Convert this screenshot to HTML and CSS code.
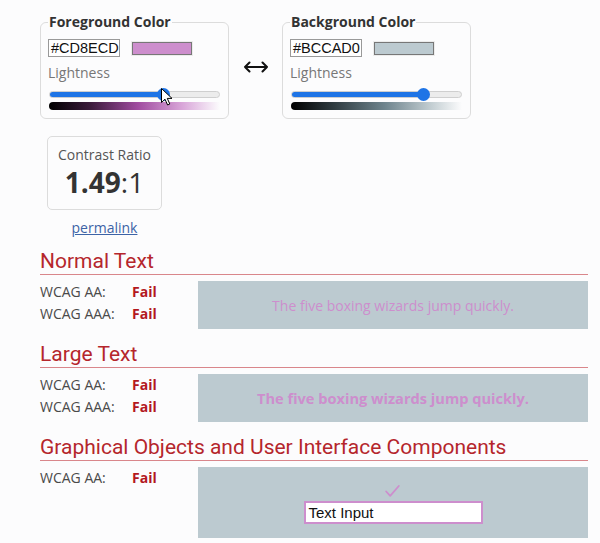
FILE: index.html
```html
<!DOCTYPE html>
<html>
<head>
<meta charset="utf-8">
<link rel="stylesheet" href="styles.css">
</head>
<body>
<div class="page">
  <div class="pickers">
    <fieldset class="picker">
      <legend>Foreground Color</legend>
      <div class="hexrow">
        <div class="hex">#CD8ECD</div>
        <div class="swatch"><span class="swatch-fill fg"></span></div>
      </div>
      <div class="label">Lightness</div>
      <div class="slider">
        <div class="track"><div class="fill" style="width:66.5%"></div></div>
        <div class="thumb" style="left:66.5%"></div>
        <svg class="cursor" width="12" height="18" viewBox="0 0 12 18"><path d="M0.5 0.5 L0.5 14.5 L4 11.2 L6.6 17 L8.8 16 L6.3 10.4 L11 10.4 Z" fill="#fff" stroke="#000" stroke-width="1" stroke-linejoin="round"/></svg>
      </div>
      <div class="grad fg-grad"></div>
    </fieldset>
    <div class="swap">
      <svg width="26" height="12" viewBox="0 0 26 12"><path d="M2 6 H24 M6.5 1.5 L2 6 L6.5 10.5 M19.5 1.5 L24 6 L19.5 10.5" fill="none" stroke="#111" stroke-width="2" stroke-linecap="round" stroke-linejoin="round"/></svg>
    </div>
    <fieldset class="picker">
      <legend>Background Color</legend>
      <div class="hexrow">
        <div class="hex">#BCCAD0</div>
        <div class="swatch"><span class="swatch-fill bg"></span></div>
      </div>
      <div class="label">Lightness</div>
      <div class="slider">
        <div class="track"><div class="fill" style="width:77%"></div></div>
        <div class="thumb" style="left:77%"></div>
      </div>
      <div class="grad bg-grad"></div>
    </fieldset>
  </div>

  <div class="ratio-col">
    <div class="ratio-box">
      <div class="ratio-title">Contrast Ratio</div>
      <div class="ratio-value"><b>1.49</b>:1</div>
    </div>
    <a class="permalink" href="#">permalink</a>
  </div>

  <section class="result">
    <h2>Normal Text</h2>
    <div class="result-body">
      <div class="checks">
        <div class="row"><span class="lvl">WCAG AA:</span><span class="fail">Fail</span></div>
        <div class="row"><span class="lvl">WCAG AAA:</span><span class="fail">Fail</span></div>
      </div>
      <div class="sample sample-normal">The five boxing wizards jump quickly.</div>
    </div>
  </section>

  <section class="result">
    <h2>Large Text</h2>
    <div class="result-body">
      <div class="checks">
        <div class="row"><span class="lvl">WCAG AA:</span><span class="fail">Fail</span></div>
        <div class="row"><span class="lvl">WCAG AAA:</span><span class="fail">Fail</span></div>
      </div>
      <div class="sample sample-large">The five boxing wizards jump quickly.</div>
    </div>
  </section>

  <section class="result">
    <h2>Graphical Objects and User Interface Components</h2>
    <div class="result-body">
      <div class="checks">
        <div class="row"><span class="lvl">WCAG AA:</span><span class="fail">Fail</span></div>
      </div>
      <div class="sample sample-ui">
        <svg class="check" width="15" height="12" viewBox="0 0 15 12"><path d="M1.2 6.5 L5.2 10.8 L13.8 1" fill="none" stroke="#cd8ecd" stroke-width="1.8" stroke-linecap="round" stroke-linejoin="round"/></svg>
        <div class="text-input">Text Input</div>
      </div>
    </div>
  </section>
</div>
</body>
</html>
```

FILE: styles.css
```css
* { box-sizing: border-box; }
html, body { margin: 0; padding: 0; }
body {
  background: #fcfcfd;
  font-family: "Open Sans", "Liberation Sans", sans-serif;
  color: #444;
  width: 600px;
  height: 543px;
  overflow: hidden;
}
.page { padding: 12px 12px 0 40px; }

.pickers { display: flex; align-items: flex-start; }
.picker {
  margin: 0;
  width: 189px;
  border: 1px solid #dcdcdc;
  border-radius: 6px;
  padding: 7px 8px 8px 7px;
  min-width: 0;
}
.picker legend {
  padding: 0 1px;
  font-weight: 700;
  font-size: 14px;
  line-height: 20px;
  color: #333;
}
.hexrow { display: flex; align-items: center; gap: 11px; }
.hex {
  width: 72px;
  height: 18px;
  border: 1px solid #999;
  background: #fff;
  font-family: "Liberation Sans", Arial, sans-serif;
  font-size: 14.5px;
  line-height: 16px;
  color: #111;
  padding-left: 2px;
  white-space: nowrap;
  overflow: hidden;
}
.swatch {
  width: 62px;
  height: 15px;
  padding: 1px;
  background: #ececec;
  display: flex;
}
.swatch-fill { flex: 1; border: 1px solid #777; }
.swatch-fill.fg { background: #cd8ecd; }
.swatch-fill.bg { background: #bccad0; }
.label {
  margin-top: 6px;
  font-size: 14px;
  line-height: 20px;
  color: #777;
}
.slider {
  position: relative;
  height: 14px;
  margin-top: 4px;
  margin-left: 1px;
}
.track {
  position: absolute;
  left: 0; right: 0; top: 4px;
  height: 7px;
  border-radius: 4px;
  background: #ececec;
  border: 1px solid #cfcfcf;
  overflow: hidden;
}
.fill { height: 100%; background: #1e74e6; }
.thumb {
  position: absolute;
  top: 1px;
  width: 13px; height: 13px;
  margin-left: -6px;
  border-radius: 50%;
  background: #1e74e6;
}
.cursor { position: absolute; left: 112px; top: 1px; }
.grad {
  height: 8px;
  margin-top: 1px;
  margin-left: 1px;
  border-radius: 4px 0 0 4px;
}
.fg-grad { background: linear-gradient(to right, #000 0%, #3a1a3a 24%, #a04ca0 52%, #d9a6d9 78%, #fcfcfd 100%); }
.bg-grad { background: linear-gradient(to right, #000 0%, #2e3b40 25%, #6f858e 55%, #c3ced2 82%, #fcfcfd 100%); }
.swap {
  width: 53px;
  display: flex;
  justify-content: center;
  margin-top: 49px;
}

.ratio-col {
  width: 115px;
  margin: 17px 0 0 7px;
  display: flex;
  flex-direction: column;
  align-items: center;
}
.ratio-box {
  width: 115px;
  border: 1px solid #dcdcdc;
  border-radius: 5px;
  padding: 8px 0 10px;
  text-align: center;
  color: #333;
}
.ratio-title { font-size: 14px; line-height: 20px; color: #555; }
.ratio-value { font-size: 28px; line-height: 34px; color: #333; }
.ratio-value b { font-weight: 700; }
.permalink {
  margin-top: 8px;
  font-size: 14px;
  line-height: 20px;
  color: #3d63a6;
  text-decoration: underline;
}

.result { margin-top: 11px; width: 548px; }
.result + .result { margin-top: 13px; }
.result h2 {
  margin: 0;
  font-family: Roboto, "Liberation Sans", sans-serif;
  font-weight: 400;
  font-size: 21px;
  line-height: 25px;
  color: #b5262c;
  border-bottom: 1px solid #d9868b;
}
.result-body { display: flex; margin-top: 6px; }
.checks { width: 158px; flex: none; }
.row { display: flex; font-size: 14px; line-height: 22px; color: #4a4a4a; }
.lvl { width: 92px; }
.fail { color: #b3181e; font-weight: 700; }
.sample {
  flex: 1;
  background: #bccad0;
  color: #cd8ecd;
  display: flex;
  align-items: center;
  justify-content: center;
}
.sample-normal { height: 48px; font-size: 14px; }
.sample-large { height: 48px; font-size: 14.6px; font-weight: 700; }
.sample-ui {
  flex-direction: column;
  justify-content: flex-start;
  padding: 18px 0 14px;
  height: 71px;
}
.check { display: block; margin-left: -2px; }
.text-input {
  margin-top: 4px;
  width: 179px;
  height: 23px;
  border: 2px solid #cd8ecd;
  background: #fff;
  color: #111;
  font-family: "Liberation Sans", Arial, sans-serif;
  font-size: 15px;
  line-height: 19px;
  padding-left: 3px;
}
```
